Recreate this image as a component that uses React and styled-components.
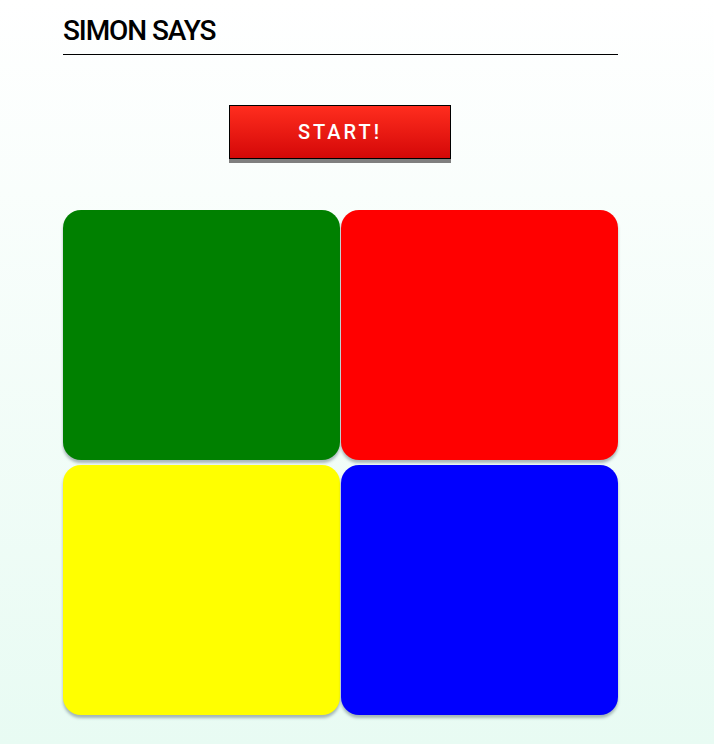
import React from 'react';
import styled, { createGlobalStyle } from 'styled-components';

const GlobalStyle = createGlobalStyle`
  html, body {
    margin: 0;
    padding: 0;
  }
  body {
    min-height: 744px;
    background: linear-gradient(180deg, #ffffff 0%, #e8fbf3 100%);
    font-family: Roboto, "Liberation Sans", sans-serif;
  }
`;

const pads = [
  { id: 'green', color: '#008000' },
  { id: 'red', color: '#ff0000' },
  { id: 'yellow', color: '#ffff00' },
  { id: 'blue', color: '#0000ff' },
];

export default function App () {
  return (
    <>
      <GlobalStyle />
      <Page>
        <Title>SIMON SAYS</Title>
        <ButtonRow>
          <StartButton type="button">START!</StartButton>
        </ButtonRow>
        <Board>
          {pads.map((pad) => (
            <Pad key={pad.id} color={pad.color} />
          ))}
        </Board>
      </Page>
    </>
  );
}

const Page = styled('div')`
  width: 555px;
  padding: 14px 0 0 63px;
`;

const Title = styled('h1')`
  margin: 0;
  padding-bottom: 7px;
  border-bottom: 1px solid #000;
  font-size: 28px;
  font-weight: 500;
  letter-spacing: -1.1px;
  line-height: 33px;
  color: #000;
`;

const ButtonRow = styled('div')`
  display: flex;
  padding: 50px 0 0 166px;
`;

const StartButton = styled('button')`
  width: 222px;
  height: 54px;
  border: 1px solid #000;
  border-radius: 0;
  background: linear-gradient(180deg, #ff2d1e 0%, #d40808 100%);
  box-shadow: 0 4px 0 #7f7f7f;
  color: #fff;
  font-family: Roboto, "Liberation Sans", sans-serif;
  font-size: 20px;
  font-weight: 500;
  letter-spacing: 3px;
  cursor: pointer;
`;

const Board = styled('div')`
  display: grid;
  grid-template-columns: 277px 277px;
  grid-auto-rows: 250px;
  column-gap: 1px;
  row-gap: 5px;
  margin-top: 51px;
`;

const Pad = styled('div')`
  background: ${(props) => props.color};
  border-radius: 18px;
  box-shadow: 0 3px 3px rgba(60, 80, 90, 0.4);
`;
